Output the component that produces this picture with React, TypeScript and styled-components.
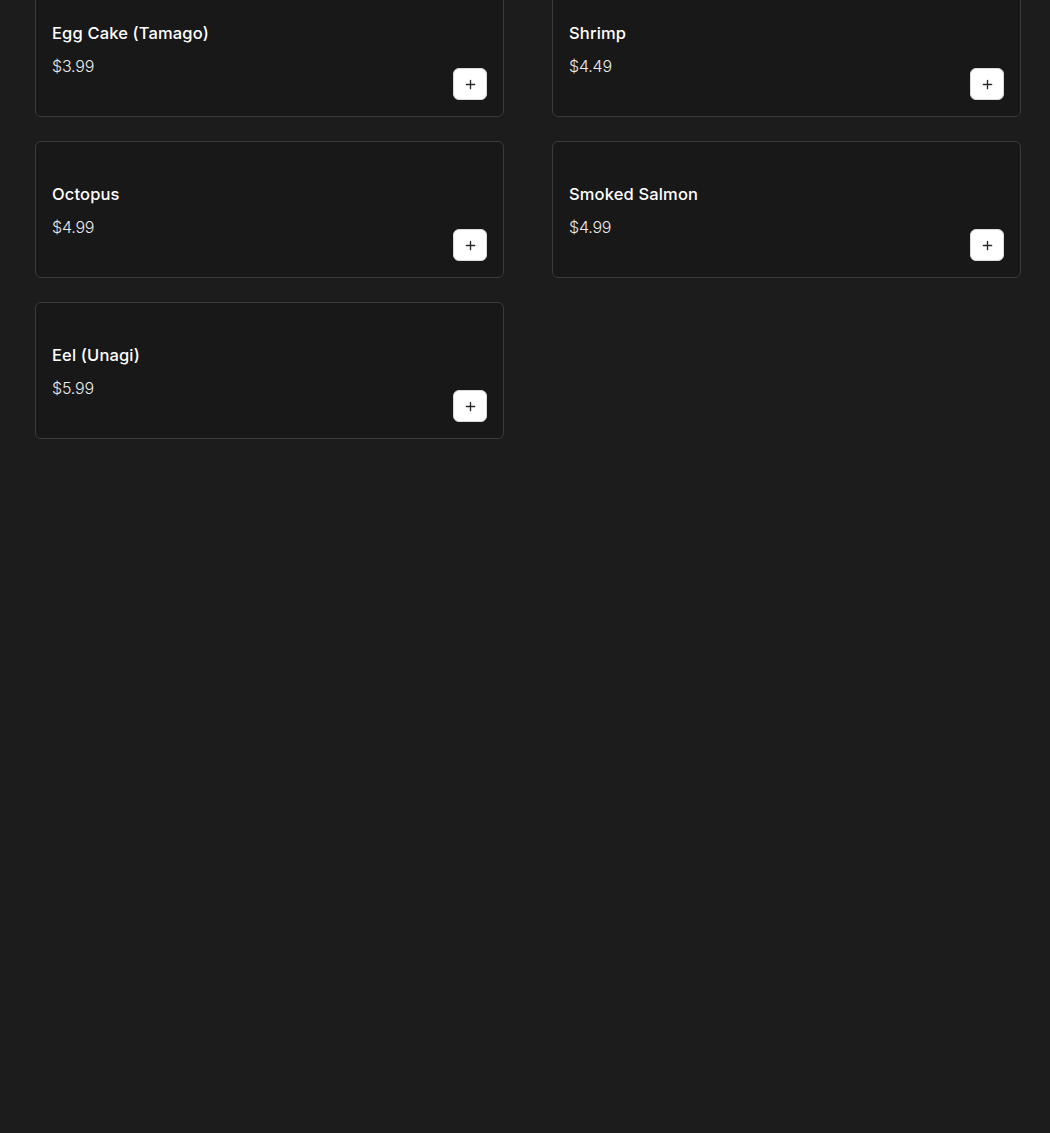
import React from "react";
import styled, { createGlobalStyle } from "styled-components";

const GlobalStyle = createGlobalStyle`
  html, body {
    margin: 0;
    padding: 0;
    background: #1c1c1c;
  }
  body {
    font-family: "Inter", "Noto Sans", sans-serif;
    color: #ffffff;
  }
`;

interface Dish {
  name: string;
  price: string;
}

const dishes: Dish[] = [
  { name: "Egg Cake (Tamago)", price: "$3.99" },
  { name: "Shrimp", price: "$4.49" },
  { name: "Octopus", price: "$4.99" },
  { name: "Smoked Salmon", price: "$4.99" },
  { name: "Eel (Unagi)", price: "$5.99" },
];

const Page = styled.div`
  min-height: 1133px;
  background: #1c1c1c;
  padding: 0 30px 0 35px;
  box-sizing: border-box;
  overflow: hidden;
`;

const Grid = styled.div`
  display: grid;
  grid-template-columns: 469px 469px;
  column-gap: 48px;
  row-gap: 24px;
  margin-top: -20px;
`;

const Card = styled.div`
  box-sizing: border-box;
  height: 137px;
  background: #181818;
  border: 1px solid #3b3b3b;
  border-radius: 6px;
  padding: 16px;
  display: flex;
  flex-direction: column;
`;

const Spacer = styled.div`
  height: 24px;
  flex-shrink: 0;
`;

const Name = styled.div`
  font-size: 16.5px;
  font-weight: 500;
  line-height: 24px;
  color: #ffffff;
  letter-spacing: 0.15px;
`;

const Footer = styled.div`
  margin-top: 9px;
  flex: 1;
  display: flex;
  justify-content: space-between;
  align-items: flex-start;
`;

const Price = styled.div`
  font-size: 16px;
  font-weight: 300;
  line-height: 24px;
  color: #ececec;
  letter-spacing: -0.2px;
`;

const AddButton = styled.button`
  align-self: flex-end;
  width: 34px;
  height: 32px;
  border: 1px solid #d9d9d9;
  border-radius: 6px;
  background: #ffffff;
  padding: 0;
  display: flex;
  align-items: center;
  justify-content: center;
  cursor: pointer;
`;

const PlusIcon = () => (
  <svg width="11" height="11" viewBox="0 0 12 12" fill="none">
    <path d="M6 1.5v9M1.5 6h9" stroke="#2a2a2a" strokeWidth="1.5" strokeLinecap="round" />
  </svg>
);

export default function App() {
  return (
    <Page>
      <GlobalStyle />
      <Grid>
        {dishes.map((d) => (
          <Card key={d.name}>
            <Spacer />
            <Name>{d.name}</Name>
            <Footer>
              <Price>{d.price}</Price>
              <AddButton aria-label={`add ${d.name}`}>
                <PlusIcon />
              </AddButton>
            </Footer>
          </Card>
        ))}
      </Grid>
    </Page>
  );
}
